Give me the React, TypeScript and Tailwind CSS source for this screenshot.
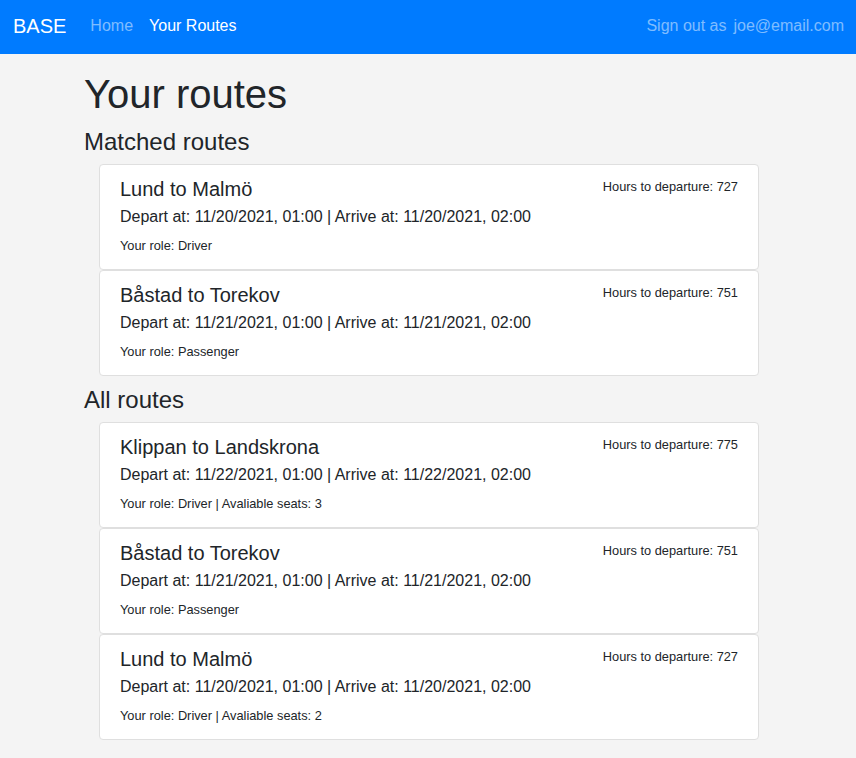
import React from "react";

type Rutt = {
  id: number;
  titel: string;
  avgang: string;
  ankomst: string;
  roll: string;
  platser?: number;
  timmar: number;
};

const matchade: Rutt[] = [
  { id: 1, titel: "Lund to Malmö", avgang: "11/20/2021, 01:00", ankomst: "11/20/2021, 02:00", roll: "Driver", timmar: 727 },
  { id: 2, titel: "Båstad to Torekov", avgang: "11/21/2021, 01:00", ankomst: "11/21/2021, 02:00", roll: "Passenger", timmar: 751 },
];

const alla: Rutt[] = [
  { id: 3, titel: "Klippan to Landskrona", avgang: "11/22/2021, 01:00", ankomst: "11/22/2021, 02:00", roll: "Driver", platser: 3, timmar: 775 },
  { id: 2, titel: "Båstad to Torekov", avgang: "11/21/2021, 01:00", ankomst: "11/21/2021, 02:00", roll: "Passenger", timmar: 751 },
  { id: 1, titel: "Lund to Malmö", avgang: "11/20/2021, 01:00", ankomst: "11/20/2021, 02:00", roll: "Driver", platser: 2, timmar: 727 },
];

function RuttKort({ rutt }: { rutt: Rutt }) {
  return (
    <div className="mx-[15px] rounded border border-[#dfdfdf] bg-white px-5 pt-3 pb-[14px]">
      <div className="flex items-start justify-between">
        <h5 className="mb-[6px] text-[20px] leading-6">{rutt.titel}</h5>
        <small className="text-[12.8px] leading-[19px]">Hours to departure: {rutt.timmar}</small>
      </div>
      <h6 className="mb-[10px] text-[16px] leading-[19px]">
        Depart at: {rutt.avgang} | Arrive at: {rutt.ankomst}
      </h6>
      <p className="text-[12.8px] leading-[19px]">
        Your role: {rutt.roll}
        {rutt.platser !== undefined && ` | Avaliable seats: ${rutt.platser}`}
      </p>
    </div>
  );
}

export default function App() {
  return (
    <div className="min-h-screen bg-[#f4f4f4] font-['Liberation_Sans',Arial,sans-serif] text-[#212529]">
      <nav className="flex h-[54px] items-center justify-between bg-[#007bff] pr-3 pb-[2px] pl-[13px]">
        <div className="flex items-center">
          <span className="text-[20px] leading-[30px] text-white">BASE</span>
          <div className="ml-4 flex items-center text-[16px] leading-6">
            <span className="px-2 text-white/50">Home</span>
            <span className="px-2 text-white">Your Routes</span>
          </div>
        </div>
        <div className="flex items-center text-[16px] leading-6 text-white/50">
          <span>Sign out as</span>
          <span className="ml-[7px]">joe@email.com</span>
        </div>
      </nav>

      <main className="mx-auto max-w-[720px] pt-4 pr-[14px] pb-5 pl-4">
        <h1 className="mb-[9px] text-[40px] leading-[48px]">Your routes</h1>

        <h4 className="mb-[8px] text-[24px] leading-[29px]">Matched routes</h4>
        <div className="flex flex-col">
          {matchade.map((r) => (
            <RuttKort key={`m-${r.id}`} rutt={r} />
          ))}
        </div>

        <h4 className="mt-[9px] mb-[8px] text-[24px] leading-[29px]">All routes</h4>
        <div className="flex flex-col">
          {alla.map((r) => (
            <RuttKort key={`a-${r.id}`} rutt={r} />
          ))}
        </div>
      </main>
    </div>
  );
}
